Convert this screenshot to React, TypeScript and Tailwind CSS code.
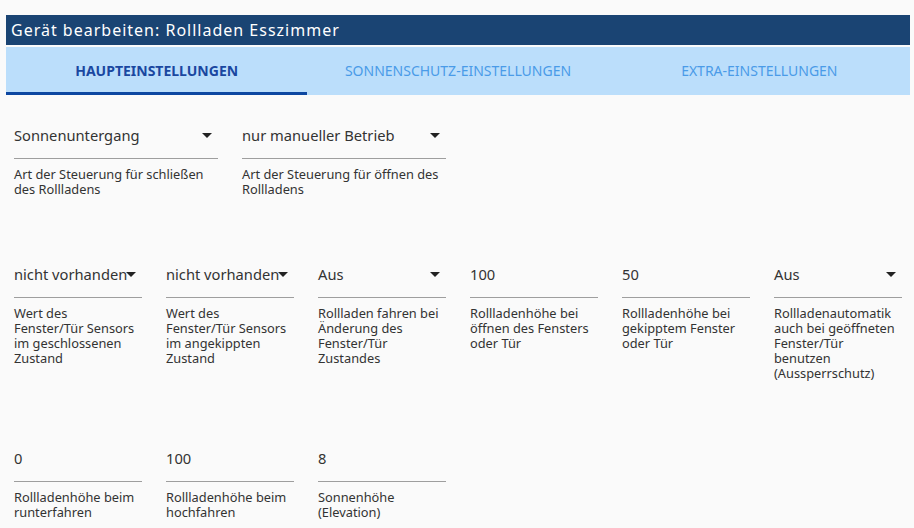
import React from "react";

type Field = { value: string; helper: string; select?: boolean };

const row1: Field[] = [
  { value: "Sonnenuntergang", helper: "Art der Steuerung für schließen des Rollladens", select: true },
  { value: "nur manueller Betrieb", helper: "Art der Steuerung für öffnen des Rollladens", select: true },
];

const row2: Field[] = [
  { value: "nicht vorhanden", helper: "Wert des Fenster/Tür Sensors im geschlossenen Zustand", select: true },
  { value: "nicht vorhanden", helper: "Wert des Fenster/Tür Sensors im angekippten Zustand", select: true },
  { value: "Aus", helper: "Rollladen fahren bei Änderung des Fenster/Tür Zustandes", select: true },
  { value: "100", helper: "Rollladenhöhe bei öffnen des Fensters oder Tür" },
  { value: "50", helper: "Rollladenhöhe bei gekipptem Fenster oder Tür" },
  { value: "Aus", helper: "Rollladenautomatik auch bei geöffneten Fenster/Tür benutzen (Aussperrschutz)", select: true },
];

const row3: Field[] = [
  { value: "0", helper: "Rollladenhöhe beim runterfahren" },
  { value: "100", helper: "Rollladenhöhe beim hochfahren" },
  { value: "8", helper: "Sonnenhöhe (Elevation)" },
];

function FieldBox({ f, wide }: { f: Field; wide?: boolean }) {
  return (
    <div className={wide ? "w-[204px]" : "w-[128px]"}>
      <div className="relative h-[34px] border-b border-[#9e9e9e]">
        <div className="text-[14.7px] leading-[20px] text-[#333] whitespace-nowrap">{f.value}</div>
        {f.select && (
          <svg
            className="absolute right-[6px] top-[8px]"
            width="10"
            height="5"
            viewBox="0 0 10 5"
          >
            <path d="M0 0 L10 0 L5 5 Z" fill="#222" />
          </svg>
        )}
      </div>
      <div className="mt-[8px] pr-[4px] text-[12.8px] leading-[15px] text-[#333]">{f.helper}</div>
    </div>
  );
}

export default function App() {
  return (
    <div
      className="w-[914px] h-[528px] overflow-hidden bg-[#fafafa] pt-[15px] px-[6px]"
      style={{ fontFamily: '"Noto Sans", "Open Sans", sans-serif' }}
    >
      <div
        className="h-[30px] w-[904px] bg-[#1a4473] text-white text-[16px] pl-[5px] flex items-center tracking-[1px]"
      >
        Gerät bearbeiten: Rollladen Esszimmer
      </div>
      <div className="mt-[2px] h-[48px] w-[904px] bg-[#bbdefb] grid grid-cols-3">
        <div className="flex items-center justify-center border-b-[3px] border-[#0d47a1] pt-[1px] text-[14px] font-bold text-[#1a47a0]">
          HAUPTEINSTELLUNGEN
        </div>
        <div className="flex items-center justify-center pb-[2px] text-[14px] text-[#4a9be8]">
          SONNENSCHUTZ-EINSTELLUNGEN
        </div>
        <div className="flex items-center justify-center pb-[2px] text-[14px] text-[#4a9be8]">
          EXTRA-EINSTELLUNGEN
        </div>
      </div>
      <div className="pl-[8px] pt-[30px] flex flex-col gap-[67px]">
        <div className="flex gap-[24px]">
          {row1.map((f, i) => (
            <FieldBox key={i} f={f} wide />
          ))}
        </div>
        <div className="flex gap-[24px]">
          {row2.map((f, i) => (
            <FieldBox key={i} f={f} />
          ))}
        </div>
        <div className="flex gap-[24px]">
          {row3.map((f, i) => (
            <FieldBox key={i} f={f} />
          ))}
        </div>
      </div>
    </div>
  );
}
